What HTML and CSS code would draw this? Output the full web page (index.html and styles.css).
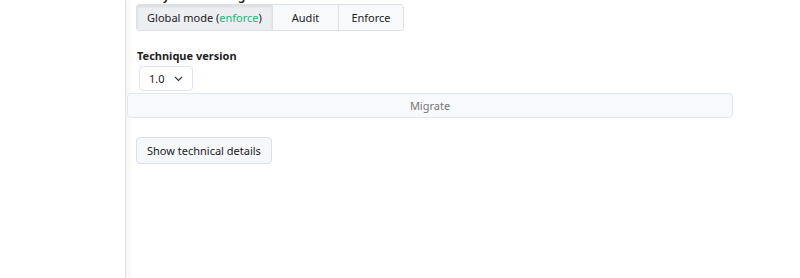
FILE: index.html
```html
<!DOCTYPE html>
<html lang="en">
<head>
  <meta charset="UTF-8">
  <title>Directive</title>
  <link rel="stylesheet" href="styles.css">
</head>
<body>
  <div class="layout">
    <aside class="sidebar"></aside>
    <main class="content">
      <label class="field-label cut">Policy mode setting</label>
      <div class="btn-group">
        <button class="seg active">Global mode (<span class="mode">enforce</span>)</button>
        <button class="seg audit">Audit</button>
        <button class="seg enforce">Enforce</button>
      </div>

      <label class="field-label version-label">Technique version</label>
      <div class="select">
        <span>1.0</span>
        <svg width="9" height="6" viewBox="0 0 9 6"><path d="M1 1l3.5 3.5L8 1" fill="none" stroke="#333" stroke-width="1.1"/></svg>
      </div>
      <div class="migrate">Migrate</div>

      <button class="details-btn">Show technical details</button>
    </main>
  </div>
</body>
</html>
```

FILE: styles.css
```css
body {
  margin: 0;
  font-family: 'Noto Sans', 'Open Sans', sans-serif;
  font-size: 11px;
  color: #333;
  background: #fff;
}

.layout {
  display: flex;
  height: 278px;
  overflow: hidden;
}

.sidebar {
  width: 125px;
  flex-shrink: 0;
  border-right: 1px solid #e3e3e3;
  box-shadow: 3px 0 6px rgba(0, 0, 0, 0.05);
}

.content {
  width: 606px;
  padding-left: 1px;
}

.field-label {
  display: block;
  font-weight: 700;
  font-size: 11px;
  line-height: 16px;
  color: #222;
  margin-left: 10px;
}

.cut {
  margin-top: -12px;
  height: 16px;
  white-space: nowrap;
}

.btn-group {
  display: flex;
  width: max-content;
  margin-left: 9px;
  border: 1px solid #dde1e6;
  border-radius: 3px;
  overflow: hidden;
}

.seg {
  font-family: inherit;
  font-size: 11px;
  color: #222;
  background: #f8f9fb;
  border: none;
  height: 25px;
  padding: 0;
  white-space: nowrap;
  cursor: pointer;
}

.seg + .seg {
  border-left: 1px solid #dde1e6;
}

.seg.active {
  background: #eceef1;
  box-shadow: inset 0 2px 3px rgba(0, 0, 0, 0.08);
  width: 135px;
}

.seg.audit {
  width: 66px;
}

.seg.enforce {
  width: 65px;
}

.mode {
  color: #1fb27a;
}

.version-label {
  margin-top: 17px;
}

.select {
  display: flex;
  align-items: center;
  gap: 9px;
  box-sizing: border-box;
  width: 54px;
  height: 25px;
  margin: 2px 0 2px 12px;
  padding: 0 9px;
  border: 1px solid #dde5f2;
  border-radius: 4px;
  color: #222;
}

.migrate {
  height: 23px;
  line-height: 23px;
  text-align: center;
  color: #777;
  background: #f8f9fc;
  border: 1px solid #e1e7f1;
  border-radius: 4px;
}

.details-btn {
  margin: 19px 0 0 9px;
  height: 27px;
  padding: 0 10px;
  font-family: inherit;
  font-size: 11px;
  color: #222;
  background: #f5f7fb;
  border: 1px solid #d9e0ec;
  border-radius: 4px;
  white-space: nowrap;
  cursor: pointer;
}
```
